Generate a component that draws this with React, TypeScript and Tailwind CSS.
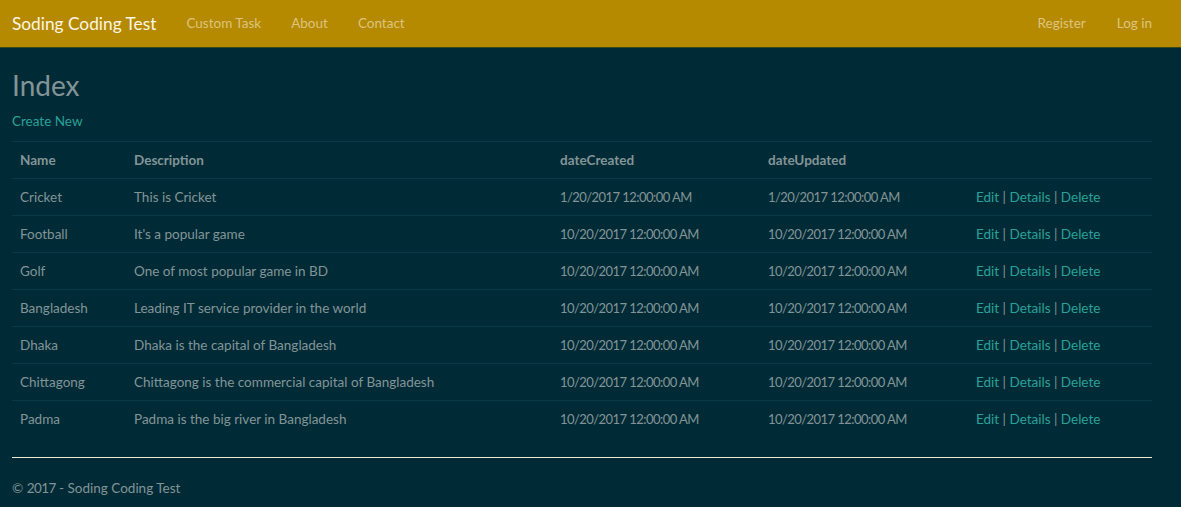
import React from 'react';

const rows = [
  { name: 'Cricket', desc: 'This is Cricket', created: '1/20/2017 12:00:00 AM', updated: '1/20/2017 12:00:00 AM' },
  { name: 'Football', desc: "It's a popular game", created: '10/20/2017 12:00:00 AM', updated: '10/20/2017 12:00:00 AM' },
  { name: 'Golf', desc: 'One of most popular game in BD', created: '10/20/2017 12:00:00 AM', updated: '10/20/2017 12:00:00 AM' },
  { name: 'Bangladesh', desc: 'Leading IT service provider in the world', created: '10/20/2017 12:00:00 AM', updated: '10/20/2017 12:00:00 AM' },
  { name: 'Dhaka', desc: 'Dhaka is the capital of Bangladesh', created: '10/20/2017 12:00:00 AM', updated: '10/20/2017 12:00:00 AM' },
  { name: 'Chittagong', desc: 'Chittagong is the commercial capital of Bangladesh', created: '10/20/2017 12:00:00 AM', updated: '10/20/2017 12:00:00 AM' },
  { name: 'Padma', desc: 'Padma is the big river in Bangladesh', created: '10/20/2017 12:00:00 AM', updated: '10/20/2017 12:00:00 AM' },
];

// Navbar
const Navbar = () => (
  <nav className="h-[48px] bg-[#b58900] border-b border-[#3a4a1c] flex items-center justify-between pl-[12px] pr-[29px]">
    <div className="flex items-center">
      <a className="text-[17.3px] text-[#fdf6e3] mr-[15px]">Soding Coding Test</a>
      {['Custom Task', 'About', 'Contact'].map((l) => (
        <a key={l} className="px-[15px] text-[13.5px] text-[#dcc47f]">{l}</a>
      ))}
    </div>
    <div className="flex items-center gap-[31px]">
      {['Register', 'Log in'].map((l) => (
        <a key={l} className="text-[13.5px] text-[#dcc47f]">{l}</a>
      ))}
    </div>
  </nav>
);

const Actions = () => (
  <span className="text-[#839496]">
    <a className="text-[#2aa198]">Edit</a> | <a className="text-[#2aa198]">Details</a> | <a className="text-[#2aa198]">Delete</a>
  </span>
);

const cell = 'px-[8px] py-[8px]';
const dateCell = 'px-[8px] py-[8px] text-[13px] tracking-[-0.55px]';

export default function App() {
  return (
    <div className="min-h-[507px] bg-[#002b36] text-[#839496] text-[13.5px] leading-[21px]" style={{ fontFamily: 'Lato, "Open Sans", sans-serif' }}>
      <Navbar />
      <main className="px-[12px] w-[1164px]">
        <h2 className="text-[28px] leading-[1.1] mt-[22px] mb-[10px] text-[#839496]">Index</h2>
        <p className="mb-[9px]">
          <a className="text-[#2aa198]">Create New</a>
        </p>
        <table className="w-[1140px] border-collapse leading-[20px]">
          <thead>
            <tr className="border-t border-[#0a3a46] text-left">
              <th className={`w-[114px] ${cell} font-bold`}>Name</th>
              <th className={`w-[426px] ${cell} font-bold`}>Description</th>
              <th className={`w-[208px] ${cell} font-bold`}>dateCreated</th>
              <th className={`w-[208px] ${cell} font-bold`}>dateUpdated</th>
              <th className={cell}></th>
            </tr>
          </thead>
          <tbody>
            {rows.map((r) => (
              <tr key={r.name} className="border-t border-[#0a3a46]">
                <td className={cell}>{r.name}</td>
                <td className={cell}>{r.desc}</td>
                <td className={dateCell}>{r.created}</td>
                <td className={dateCell}>{r.updated}</td>
                <td className={cell}><Actions /></td>
              </tr>
            ))}
          </tbody>
        </table>
        <hr className="mt-[20px] mb-[20px] w-[1140px] border-0 border-t border-[#eee8d5]" />
        <footer>
          <p>
            © <span className="tracking-[-0.6px]">2017</span> - Soding Coding Test
          </p>
        </footer>
      </main>
    </div>
  );
}
